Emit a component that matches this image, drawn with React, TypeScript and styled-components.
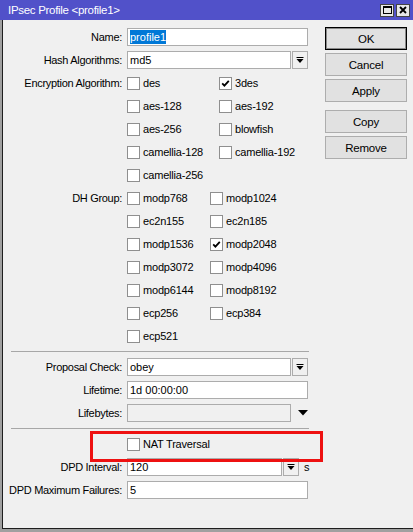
import React from "react";
import styled, { createGlobalStyle } from "styled-components";

const GlobalStyle = createGlobalStyle`
  html, body {
    margin: 0;
    padding: 0;
    background: #a0a0a0;
  }
  body {
    font-family: "Liberation Sans", Arial, sans-serif;
    font-size: 11px;
    color: #000;
  }
`;

const Window = styled.div`
  width: 413px;
  height: 532px;
  display: flex;
  flex-direction: column;
  background: #a0a0a0;
  overflow: hidden;
`;

const TitleBar = styled.div`
  height: 20px;
  background: #5151c9;
  color: #fff;
  display: flex;
  align-items: center;
  padding: 0 3px 0 8px;
  flex-shrink: 0;
`;

const Title = styled.div`
  flex: 1;
  font-size: 11.5px;
  letter-spacing: -0.3px;
  padding-bottom: 1px;
`;

const TitleButtons = styled.div`
  display: flex;
  gap: 2px;
`;

const TitleButton = styled.div`
  width: 14px;
  height: 13px;
  background: #e8e8e8;
  border: 1px solid #444;
  box-sizing: border-box;
  display: flex;
  align-items: center;
  justify-content: center;
`;

const Body = styled.div`
  flex: 1;
  margin: 0 0 3px 2px;
  border-left: 1px solid #1e1e1e;
  border-bottom: 1px solid #1e1e1e;
  background: #f0f0f0;
  display: flex;
  align-items: flex-start;
`;

const Form = styled.div`
  width: 306px;
  padding-top: 8px;
  display: flex;
  flex-direction: column;
  gap: 5px;
`;

const Row = styled.div<{ $relative?: boolean }>`
  display: grid;
  grid-template-columns: 119px 1fr;
  column-gap: 5px;
  align-items: start;
  position: ${(p) => (p.$relative ? "relative" : "static")};
`;

const Label = styled.div`
  height: 18px;
  line-height: 18px;
  text-align: right;
  letter-spacing: -0.3px;
  white-space: nowrap;
`;

const FieldLine = styled.div`
  display: flex;
  align-items: center;
  height: 18px;
`;

const Input = styled.div<{ $width: number; $disabled?: boolean }>`
  width: ${(p) => p.$width}px;
  height: 18px;
  box-sizing: border-box;
  border: 1px solid #acacac;
  background: ${(p) => (p.$disabled ? "#f0f0f0" : "#fff")};
  padding: 0 2px;
  line-height: 16px;
  white-space: nowrap;
  overflow: hidden;
`;

const Selected = styled.span`
  background: #0078d7;
  color: #fff;
  padding: 1px 0;
`;

const DropButton = styled.div`
  width: 16px;
  height: 18px;
  box-sizing: border-box;
  border: 1px solid #acacac;
  background: #f0f0f0;
  margin-left: 1px;
  display: flex;
  align-items: center;
  justify-content: center;
`;

const BareArrow = styled.div`
  width: 16px;
  height: 18px;
  margin-left: 4px;
  display: flex;
  align-items: center;
  justify-content: center;
`;

const Unit = styled.span`
  margin-left: 5px;
`;

const CheckGrid = styled.div<{ $col: number }>`
  display: grid;
  grid-template-columns: ${(p) => p.$col}px 1fr;
  row-gap: 5px;
`;

const CheckItem = styled.div`
  height: 18px;
  display: flex;
  align-items: center;
  gap: 3px;
  letter-spacing: -0.2px;
  white-space: nowrap;
`;

const Box = styled.div`
  width: 13px;
  height: 13px;
  box-sizing: border-box;
  border: 1px solid #8f8f8f;
  background: #fff;
  display: flex;
  align-items: center;
  justify-content: center;
  flex-shrink: 0;
`;

const Separator = styled.div`
  height: 3px;
  margin-left: 8px;
  width: 298px;
  display: flex;
  align-items: center;
  &::before {
    content: "";
    display: block;
    width: 100%;
    height: 1px;
    background: #a7a7a7;
  }
`;

const Highlight = styled.div`
  position: absolute;
  left: 87px;
  top: -4px;
  width: 233px;
  height: 31px;
  box-sizing: border-box;
  border: 3px solid #ee1111;
  pointer-events: none;
`;

const ButtonColumn = styled.div`
  margin-left: 16px;
  padding-top: 7px;
  display: flex;
  flex-direction: column;
  gap: 3px;
`;

const Button = styled.div<{ $default?: boolean; $spaced?: boolean }>`
  width: 82px;
  height: 23px;
  box-sizing: border-box;
  border: 1px solid ${(p) => (p.$default ? "#000" : "#adadad")};
  box-shadow: ${(p) => (p.$default ? "inset 0 0 0 1px #8a8a8a" : "none")};
  background: #e1e1e1;
  margin-top: ${(p) => (p.$spaced ? "5px" : "0")};
  display: flex;
  align-items: center;
  justify-content: center;
  font-size: 11.5px;
  letter-spacing: -0.2px;
`;

function CheckMark() {
	return (
		<svg width="9" height="9" viewBox="0 0 9 9">
			<path d="M1.2 4.4 L3.4 6.6 L7.8 1.8" fill="none" stroke="#000" strokeWidth="1.8" />
		</svg>
	);
}

function DropIcon() {
	return (
		<svg width="8" height="7" viewBox="0 0 8 7">
			<rect x="0.5" y="0" width="7" height="1" fill="#000" />
			<path d="M0.5 2 H7.5 L4 6 Z" fill="#000" />
		</svg>
	);
}

function Check(props: { label: string; checked?: boolean }) {
	return (
		<CheckItem>
			<Box>{props.checked && <CheckMark />}</Box>
			{props.label}
		</CheckItem>
	);
}

const encryption: [string, boolean][] = [
	["des", false],
	["3des", true],
	["aes-128", false],
	["aes-192", false],
	["aes-256", false],
	["blowfish", false],
	["camellia-128", false],
	["camellia-192", false],
	["camellia-256", false],
];

const dhGroups: [string, boolean][] = [
	["modp768", false],
	["modp1024", false],
	["ec2n155", false],
	["ec2n185", false],
	["modp1536", false],
	["modp2048", true],
	["modp3072", false],
	["modp4096", false],
	["modp6144", false],
	["modp8192", false],
	["ecp256", false],
	["ecp384", false],
	["ecp521", false],
];

export default function App() {
	return (
		<>
			<GlobalStyle />
			<Window>
				<TitleBar>
					<Title>IPsec Profile &lt;profile1&gt;</Title>
					<TitleButtons>
						<TitleButton>
							<svg width="9" height="8" viewBox="0 0 9 8">
								<rect x="0.5" y="0.5" width="8" height="7" fill="none" stroke="#000" />
								<rect x="0.5" y="0.5" width="8" height="1.5" fill="#000" />
							</svg>
						</TitleButton>
						<TitleButton>
							<svg width="8" height="8" viewBox="0 0 8 8">
								<path d="M1 1 L7 7 M7 1 L1 7" stroke="#000" strokeWidth="1.8" />
							</svg>
						</TitleButton>
					</TitleButtons>
				</TitleBar>
				<Body>
					<Form>
						<Row>
							<Label>Name:</Label>
							<FieldLine>
								<Input $width={181}>
									<Selected>profile1</Selected>
								</Input>
							</FieldLine>
						</Row>
						<Row>
							<Label>Hash Algorithms:</Label>
							<FieldLine>
								<Input $width={164}>md5</Input>
								<DropButton>
									<DropIcon />
								</DropButton>
							</FieldLine>
						</Row>
						<Row>
							<Label>Encryption Algorithm:</Label>
							<CheckGrid $col={92}>
								{encryption.map(([name, checked]) => (
									<Check key={name} label={name} checked={checked} />
								))}
							</CheckGrid>
						</Row>
						<Row>
							<Label>DH Group:</Label>
							<CheckGrid $col={83}>
								{dhGroups.map(([name, checked]) => (
									<Check key={name} label={name} checked={checked} />
								))}
							</CheckGrid>
						</Row>
						<Separator />
						<Row>
							<Label>Proposal Check:</Label>
							<FieldLine>
								<Input $width={164}>obey</Input>
								<DropButton>
									<DropIcon />
								</DropButton>
							</FieldLine>
						</Row>
						<Row>
							<Label>Lifetime:</Label>
							<FieldLine>
								<Input $width={181}>1d 00:00:00</Input>
							</FieldLine>
						</Row>
						<Row>
							<Label>Lifebytes:</Label>
							<FieldLine>
								<Input $width={164} $disabled />
								<BareArrow>
									<svg width="10" height="6" viewBox="0 0 10 6">
										<path d="M0 0 H10 L5 5.5 Z" fill="#000" />
									</svg>
								</BareArrow>
							</FieldLine>
						</Row>
						<Separator />
						<Row $relative>
							<Label />
							<Check label="NAT Traversal" />
							<Highlight />
						</Row>
						<Row>
							<Label>DPD Interval:</Label>
							<FieldLine>
								<Input $width={155}>120</Input>
								<DropButton>
									<DropIcon />
								</DropButton>
								<Unit>s</Unit>
							</FieldLine>
						</Row>
						<Row>
							<Label>DPD Maximum Failures:</Label>
							<FieldLine>
								<Input $width={181}>5</Input>
							</FieldLine>
						</Row>
					</Form>
					<ButtonColumn>
						<Button $default>OK</Button>
						<Button>Cancel</Button>
						<Button>Apply</Button>
						<Button $spaced>Copy</Button>
						<Button>Remove</Button>
					</ButtonColumn>
				</Body>
			</Window>
		</>
	);
}
